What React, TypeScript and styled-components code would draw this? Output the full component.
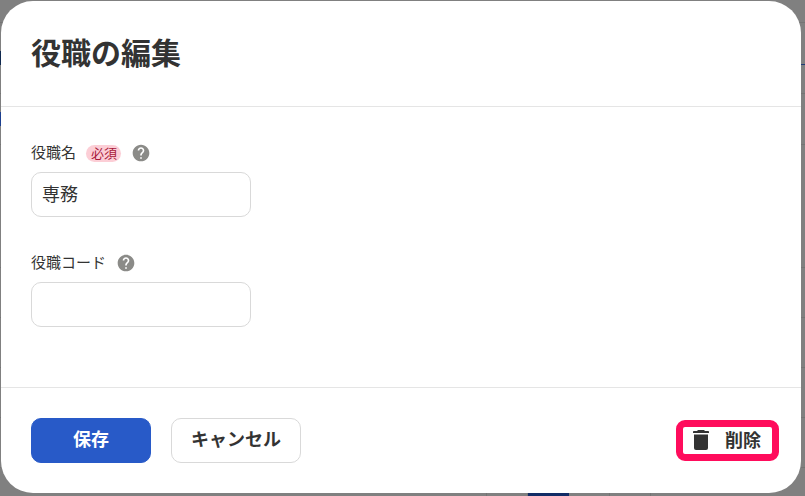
import React from "react";
import styled, { createGlobalStyle } from "styled-components";

const GlobalStyle = createGlobalStyle`
  *, *::before, *::after { box-sizing: border-box; }
  body {
    margin: 0;
    color: #333;
    background: #808080;
    font-family: "Noto Sans CJK JP", sans-serif;
  }
  button, input { font: inherit; color: inherit; }
`;

const Screen = styled.div`
  position: relative;
  min-height: 100vh;
  display: flex;
  overflow: hidden;
`;

/* Dimmed page lying under the dialog */
const Backdrop = styled.div`
  position: absolute;
  inset: 0;
  display: flex;
  flex-direction: column;
`;

const Band = styled.div<{ $height: number }>`
  flex: none;
  display: flex;
  justify-content: space-between;
  align-items: center;
  height: ${(p) => p.$height}px;
  border-bottom: 1px solid #747474;
`;

const Mark = styled.span<{ $color: string; $width: number }>`
  width: ${(p) => p.$width}px;
  height: 14px;
  background: ${(p) => p.$color};
`;

const LinkEnd = styled.span`
  width: 4px;
  height: 14px;
  border-bottom: 1px solid #1f3a78;
`;

const Pager = styled.div`
  display: flex;
  justify-content: flex-end;
  padding-right: 154px;
  flex: 1;
`;

const Page = styled.span<{ $current?: boolean }>`
  width: 41px;
  border-right: 1px solid ${(p) => (p.$current ? "#122c66" : "#747474")};
  background: ${(p) => (p.$current ? "#122c66" : "transparent")};
`;

const Dialog = styled.form`
  position: relative;
  flex: 1;
  display: flex;
  flex-direction: column;
  margin: 1px 4px 3px 1px;
  border-radius: 32px;
  background: #fff;
`;

const Header = styled.header`
  padding: 28px 30px 32px;
  border-bottom: 1px solid #e5e5e5;
`;

const Title = styled.h1`
  margin: 0;
  font-size: 30px;
  line-height: 45px;
  font-weight: 700;
`;

const Body = styled.div`
  flex: 1;
  display: flex;
  flex-direction: column;
  gap: 35px;
  padding: 35px 30px 60px;
`;

const Field = styled.div`
  display: flex;
  flex-direction: column;
  align-items: flex-start;
  gap: 8px;
`;

const LabelRow = styled.div`
  display: flex;
  align-items: center;
  gap: 10px;
  height: 22px;
`;

const Label = styled.label`
  padding-bottom: 2px;
  font-size: 15px;
  line-height: 20px;
`;

const Required = styled.span`
  padding: 0 4px 2px 5px;
  border-radius: 9px;
  background: #fcced6;
  color: #a8183a;
  font-size: 13px;
  line-height: 15px;
`;

const HelpButton = styled.button`
  display: flex;
  padding: 0;
  border: 0;
  background: none;
  color: #8b8b88;
`;

const TextInput = styled.input`
  width: 220px;
  height: 45px;
  padding: 0 10px 4px;
  border: 1px solid #d9d9d9;
  border-radius: 10px;
  background: #fff;
  font-size: 18px;
`;

const Footer = styled.footer`
  display: flex;
  align-items: center;
  gap: 20px;
  padding: 30px 22px 30px 30px;
  border-top: 1px solid #e5e5e5;
`;

const Button = styled.button<{ $primary?: boolean }>`
  min-width: 120px;
  height: 45px;
  padding: 0 19px 5px;
  border: 1px solid ${(p) => (p.$primary ? "#285ac8" : "#d9d9d9")};
  border-radius: 10px;
  background: ${(p) => (p.$primary ? "#285ac8" : "#fff")};
  color: ${(p) => (p.$primary ? "#fff" : "#333")};
  font-size: 18px;
  font-weight: 700;
`;

const DeleteButton = styled.button`
  display: flex;
  align-items: center;
  gap: 16px;
  height: 41px;
  margin-left: auto;
  padding: 0 11px 2px 10px;
  border: 7px solid #ff0c5c;
  border-radius: 9px;
  background: #fff;
  font-size: 18px;
  line-height: 24px;
  font-weight: 700;
`;

const DeleteText = styled.span`
  padding-bottom: 2px;
`;

const HelpIcon = () => (
  <svg width="20" height="20" viewBox="0 0 24 24" fill="currentColor" aria-hidden="true">
    <path d="M12 2C6.48 2 2 6.48 2 12s4.48 10 10 10 10-4.48 10-10S17.52 2 12 2zm1 17h-2v-2h2v2zm2.07-7.75l-.9.92C13.45 12.9 13 13.5 13 15h-2v-.5c0-1.1.45-2.1 1.17-2.83l1.24-1.26c.37-.36.59-.86.59-1.41 0-1.1-.9-2-2-2s-2 .9-2 2H8c0-2.21 1.79-4 4-4s4 1.79 4 4c0 .88-.36 1.68-.93 2.25z" />
  </svg>
);

const TrashIcon = () => (
  <svg width="16" height="20" viewBox="0 0 16 20" fill="currentColor" aria-hidden="true">
    <path d="M5 0h6l1 1h3.2c.5 0 .8.3.8.8V3H0V1.8c0-.5.3-.8.8-.8H4z" />
    <path d="M1 4.5h14V18a2 2 0 0 1-2 2H3a2 2 0 0 1-2-2z" />
  </svg>
);

const Help = ({ label }: { label: string }) => (
  <HelpButton type="button" aria-label={label}>
    <HelpIcon />
  </HelpButton>
);

export default function App() {
  return (
    <>
      <GlobalStyle />
      <Screen>
        <Backdrop aria-hidden="true">
          <Band $height={23} />
          <Band $height={71}>
            <Mark $color="#10294f" $width={1} />
            <LinkEnd />
          </Band>
          <Band $height={51}>
            <Mark $color="#1c3f8f" $width={1} />
          </Band>
          <Band $height={123} />
          <Band $height={50} />
          <Band $height={50} />
          <Band $height={50} />
          <Band $height={50} />
          <Pager>
            <Page />
            <Page />
            <Page $current />
            <Page />
            <Page />
          </Pager>
        </Backdrop>
        <Dialog role="dialog" aria-labelledby="dialog-title" onSubmit={(e) => e.preventDefault()}>
          <Header>
            <Title id="dialog-title">役職の編集</Title>
          </Header>
          <Body>
            <Field>
              <LabelRow>
                <Label htmlFor="position-name">役職名</Label>
                <Required>必須</Required>
                <Help label="役職名のヘルプ" />
              </LabelRow>
              <TextInput id="position-name" type="text" defaultValue="専務" required />
            </Field>
            <Field>
              <LabelRow>
                <Label htmlFor="position-code">役職コード</Label>
                <Help label="役職コードのヘルプ" />
              </LabelRow>
              <TextInput id="position-code" type="text" />
            </Field>
          </Body>
          <Footer>
            <Button type="submit" $primary>
              保存
            </Button>
            <Button type="button">キャンセル</Button>
            <DeleteButton type="button">
              <TrashIcon />
              <DeleteText>削除</DeleteText>
            </DeleteButton>
          </Footer>
        </Dialog>
      </Screen>
    </>
  );
}
